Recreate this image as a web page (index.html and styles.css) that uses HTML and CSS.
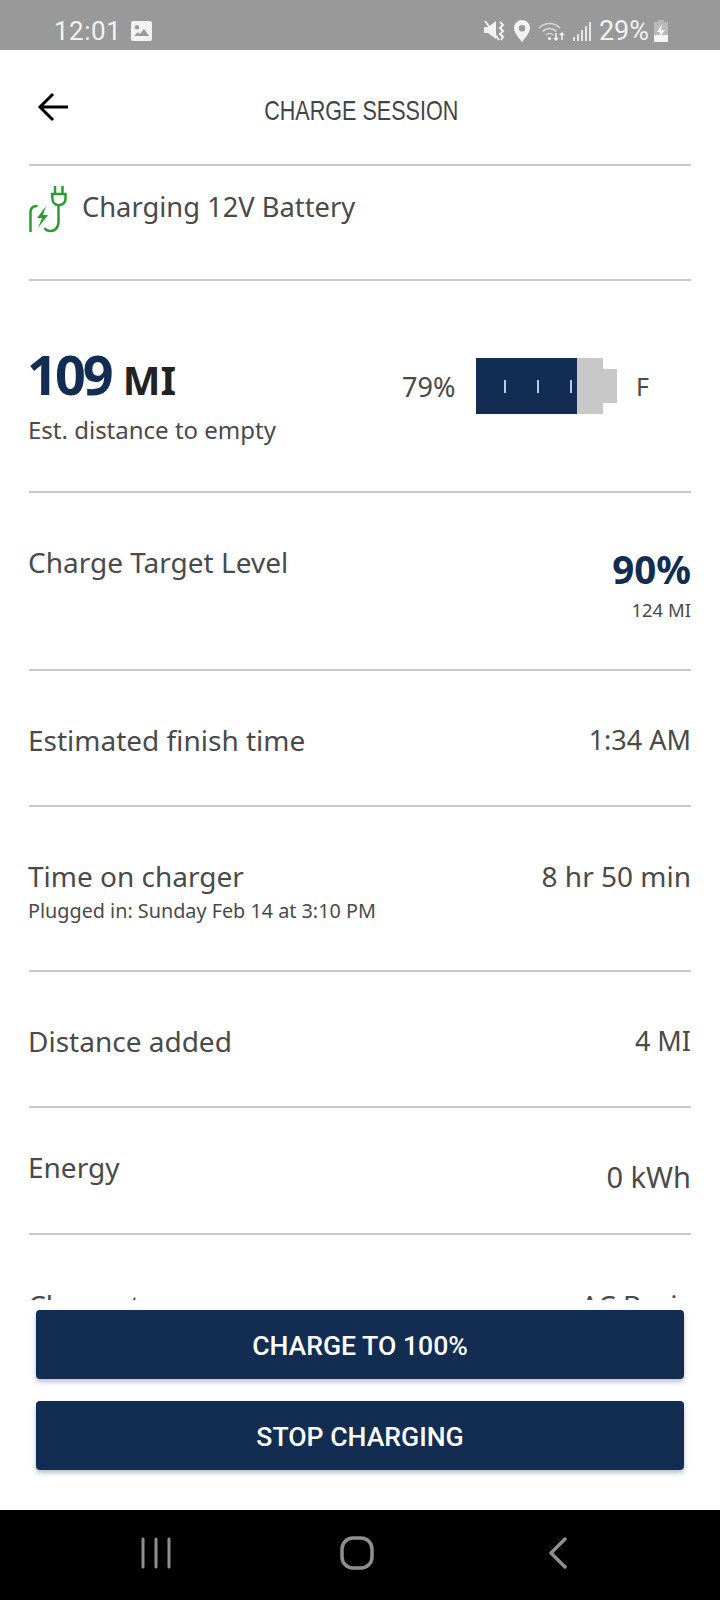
FILE: index.html
```html
<!DOCTYPE html>
<html lang="en">
<head>
<meta charset="UTF-8" />
<meta name="viewport" content="width=device-width, initial-scale=1" />
<title>Charge Session</title>
<link rel="stylesheet" href="styles.css">
</head>
<body>

<div class="status-bar">
  <div class="status-left">
    <span class="clock">12:01</span>
    <svg class="status-icon" width="21" height="20" viewBox="0 0 21 20">
      <path fill="#f2f2f2" fill-rule="evenodd" d="M2 0h17a2 2 0 0 1 2 2v16a2 2 0 0 1-2 2H2a2 2 0 0 1-2-2V2a2 2 0 0 1 2-2zM3 15h15l-5-7-4 5-2-2zM6 4a2.2 2.2 0 1 0 0 4.400a2.200 2.200 0 0 0 0-4.400z"/>
    </svg>
  </div>
  <div class="status-right">
    <svg width="22" height="22" viewBox="0 0 22 22">
      <path fill="#f2f2f2" d="M0 7h4l8-6v18l-8-6H0z"/>
      <path fill="none" stroke="#f2f2f2" stroke-width="2" d="M16 2l3 3-3 3 3 3-3 3 3 3-2 3M1 1l14 19"/>
    </svg>
    <svg width="18" height="22" viewBox="0 0 18 22">
      <path fill="#f2f2f2" fill-rule="evenodd" d="M9 0a8 8 0 0 1 8 8c0 5-5 10-8 14C6 18 1 13 1 8a8 8 0 0 1 8-8zm0 5a3.200 3.200 0 1 0 0 6.400A3.200 3.200 0 0 0 9 5z"/>
    </svg>
    <svg width="28" height="22" viewBox="0 0 28 22">
      <path fill="none" stroke="#d8d8d8" stroke-width="1.600" d="M1 8c6-6 15-6 21 0M4.500 11.500c4-4 10-4 14 0M8 15c2-2 5-2 7 0"/>
      <circle cx="11.500" cy="18.500" r="1.600" fill="#eee"/>
      <path fill="none" stroke="#f2f2f2" stroke-width="1.500" d="M18 13v7M16 18l2 2 2-2M24 20v-7M22 15l2-2 2 2"/>
    </svg>
    <svg width="19" height="22" viewBox="0 0 19 22">
      <path fill="#e6e6e6" d="M0 17h2v4H0zM4 14h2v7H4zM8 10h2v11H8zM12 6h2v15h-2zM16 2h2v19h-2z"/>
    </svg>
    <span class="battery-pct">29%</span>
    <svg class="battery-icon" width="16" height="22" viewBox="0 0 16 22">
      <path fill="#b9b9b9" d="M5 0h6v2h4v20H1V2h4z"/>
      <path fill="#f5f5f5" d="M1 15h14v7H1z"/>
      <path fill="#f5f5f5" d="M9 4l-5 8h3l-1 6 6-8H8z"/>
    </svg>
  </div>
</div>

<div class="app">
  <header class="top-bar">
    <svg class="back-arrow" width="32" height="30" viewBox="0 0 32 30">
      <path fill="none" stroke="#000" stroke-width="3" d="M31 15H4M16 2L3 15l13 13"/>
    </svg>
    <h1>CHARGE SESSION</h1>
  </header>

  <div class="session-list">
    <div class="row charging-row">
      <svg class="plug-icon" width="38" height="48" viewBox="0 0 38 48">
        <g fill="none" stroke="#2a9c32" stroke-width="2.500">
          <path d="M26 1v8M33.500 1v8M23 9h13.500v5a6 6 0 0 1-6 6h-1.500a6 6 0 0 1-5.500-6zM29.500 20v17c0 6-4 9-8 9-3 0-5-1-6-3"/>
          <path d="M1.500 47V27c0-4 2-6 7-6"/>
        </g>
        <path fill="#2a9c32" d="M17 21l-9 12h5l-4 10 10-13h-5l3-9z"/>
      </svg>
      <span class="charging-text">Charging 12V Battery</span>
    </div>

    <div class="row range-row">
      <div class="range-left">
        <div class="range-value"><span class="range-num">109</span> <span class="range-unit">MI</span></div>
        <div class="range-note">Est. distance to empty</div>
      </div>
      <div class="range-right">
        <span class="fuel-pct">79%</span>
        <div class="battery">
          <div class="battery-body">
            <div class="battery-fill">
              <i></i><i></i><i></i>
            </div>
          </div>
          <div class="battery-nub"></div>
        </div>
        <span class="fuel-f">F</span>
      </div>
    </div>

    <div class="row target-row">
      <span class="label">Charge Target Level</span>
      <div class="target-right">
        <div class="target-pct">90%</div>
        <div class="target-mi">124 MI</div>
      </div>
    </div>

    <div class="row finish-row">
      <span class="label">Estimated finish time</span>
      <span class="value">1:34 AM</span>
    </div>

    <div class="row charger-row">
      <div>
        <div class="label">Time on charger</div>
        <div class="sub-label">Plugged in: Sunday Feb 14 at 3:10 PM</div>
      </div>
      <span class="value">8 hr 50 min</span>
    </div>

    <div class="row added-row">
      <span class="label">Distance added</span>
      <span class="value">4 MI</span>
    </div>

    <div class="row energy-row">
      <span class="label">Energy</span>
      <span class="value">0 kWh</span>
    </div>

    <div class="row type-row">
      <span class="label">Charge type</span>
      <span class="value">AC Basic</span>
    </div>
  </div>

  <div class="actions">
    <button class="action-btn">CHARGE TO 100%</button>
    <button class="action-btn">STOP CHARGING</button>
  </div>
</div>

<nav class="nav-bar">
  <svg width="32" height="32" viewBox="0 0 32 32">
    <path fill="none" stroke="#8f8f8f" stroke-width="3" stroke-linecap="round" d="M3 2v28M16 2v28M29 2v28"/>
  </svg>
  <svg width="34" height="34" viewBox="0 0 34 34">
    <rect x="2" y="2" width="30" height="30" rx="11" fill="none" stroke="#8f8f8f" stroke-width="3.500"/>
  </svg>
  <svg width="20" height="32" viewBox="0 0 20 32">
    <path fill="none" stroke="#8f8f8f" stroke-width="3.500" stroke-linecap="round" stroke-linejoin="round" d="M17 2L3 16l14 14"/>
  </svg>
</nav>

</body>
</html>
```

FILE: styles.css
```css
* {
  box-sizing: border-box;
}

body {
  margin: 0;
  width: 720px;
  height: 1600px;
  display: flex;
  flex-direction: column;
  overflow: hidden;
  background: #fff;
  color: #4a4a4a;
  font-family: 'Noto Sans', 'Open Sans', sans-serif;
}

/* Status bar */
.status-bar {
  height: 50px;
  flex: none;
  background: #999;
  color: #f2f2f2;
  display: flex;
  justify-content: space-between;
  align-items: center;
  padding: 12px 51px 0 54px;
  font-family: Roboto, sans-serif;
  font-size: 26px;
}
.status-left,
.status-right {
  display: flex;
  align-items: center;
}
.status-left {
  gap: 10px;
}
.status-right {
  gap: 7px;
}
.clock {
  letter-spacing: 0.5px;
}
.battery-pct {
  font-size: 27px;
}
.battery-icon {
  margin-left: -3px;
}

.app {
  flex: 1;
  min-height: 0;
  display: flex;
  flex-direction: column;
}

/* Header */
.top-bar {
  height: 114px;
  flex: none;
  display: grid;
  grid-template-columns: 1fr auto 1fr;
  align-items: center;
  padding-left: 37px;
}
.top-bar h1 {
  margin: 8px 0 0;
  font-family: 'Liberation Sans', sans-serif;
  font-size: 28px;
  font-weight: 400;
  color: #444;
  padding-right: 45px;
  transform: scaleX(0.77);
}

/* List */
.session-list {
  flex: 1;
  min-height: 0;
  overflow: hidden;
  padding: 0 29px;
}
.row {
  display: flex;
  justify-content: space-between;
  border-top: 2px solid #c9c9c9;
}
.label,
.value {
  font-size: 28px;
  line-height: 36px;
}
.label,
.sub-label,
.range-note {
  margin-left: -1px;
}

.charging-row {
  height: 115px;
  justify-content: flex-start;
  gap: 15px;
  padding-top: 19px;
}
.charging-text {
  font-size: 27.300px;
  line-height: 44px;
}

.range-row {
  height: 212px;
  padding-top: 61px;
}
.range-value {
  line-height: 64px;
  font-weight: 700;
  margin-left: -2px;
}
.range-num {
  font-size: 54px;
  letter-spacing: -3px;
  color: #132c54;
}
.range-unit {
  font-size: 40px;
  color: #222;
  margin-left: 8px;
}
.range-note {
  font-size: 24px;
  line-height: 34px;
  margin-top: -8px;
}
.range-right {
  display: flex;
  align-items: center;
  height: 56px;
  margin-top: 16px;
  padding-right: 42px;
}
.fuel-pct {
  font-size: 27px;
  width: 74px;
}
.fuel-f {
  font-size: 25px;
  margin-left: 19px;
}
.battery {
  display: flex;
  align-items: center;
}
.battery-body {
  width: 127px;
  height: 56px;
  background: #c8c8c8;
}
.battery-fill {
  width: 101px;
  height: 56px;
  background: #132c54;
  display: flex;
  justify-content: flex-end;
  align-items: center;
  gap: 31px;
  padding-right: 5px;
}
.battery-fill i {
  width: 2px;
  height: 13px;
  background: #b6cdea;
}
.battery-nub {
  width: 14px;
  height: 34px;
  background: #c8c8c8;
}

.target-row {
  height: 178px;
  padding-top: 51px;
}
.target-right {
  text-align: right;
}
.target-pct {
  font-size: 38.500px;
  line-height: 50px;
  font-weight: 700;
  color: #132c54;
}
.target-mi {
  font-size: 18.500px;
  line-height: 28px;
  margin-top: 2px;
}

.finish-row {
  height: 136px;
  padding-top: 51px;
}
.finish-row .value,
.added-row .value {
  font-size: 27px;
}
.charger-row {
  height: 165px;
  padding-top: 51px;
}
.sub-label {
  font-size: 19.800px;
  line-height: 28px;
  margin-top: 3px;
}
.added-row {
  height: 136px;
  padding-top: 51px;
}
.energy-row {
  height: 127px;
  padding-top: 41px;
}
.energy-row .value {
  font-size: 29px;
  margin-top: 10px;
}
.type-row {
  height: 120px;
  padding-top: 52px;
}

/* Buttons */
.actions {
  height: 210px;
  flex: none;
  padding: 10px 36px 0;
  display: flex;
  flex-direction: column;
  gap: 22px;
  background: #fff;
}
.action-btn {
  height: 69px;
  padding-top: 3px;
  border: none;
  border-radius: 4px;
  background: #132c52;
  color: #fff;
  font-family: Roboto, sans-serif;
  font-size: 26.600px;
  font-weight: 500;
  box-shadow: 0 3px 5px rgba(19, 44, 82, 0.3);
}

/* Android nav */
.nav-bar {
  height: 90px;
  flex: none;
  background: #000;
  display: grid;
  grid-template-columns: 1fr 1fr 1fr;
  justify-items: center;
  align-items: center;
  padding: 0 61px 4px 55px;
}
```
